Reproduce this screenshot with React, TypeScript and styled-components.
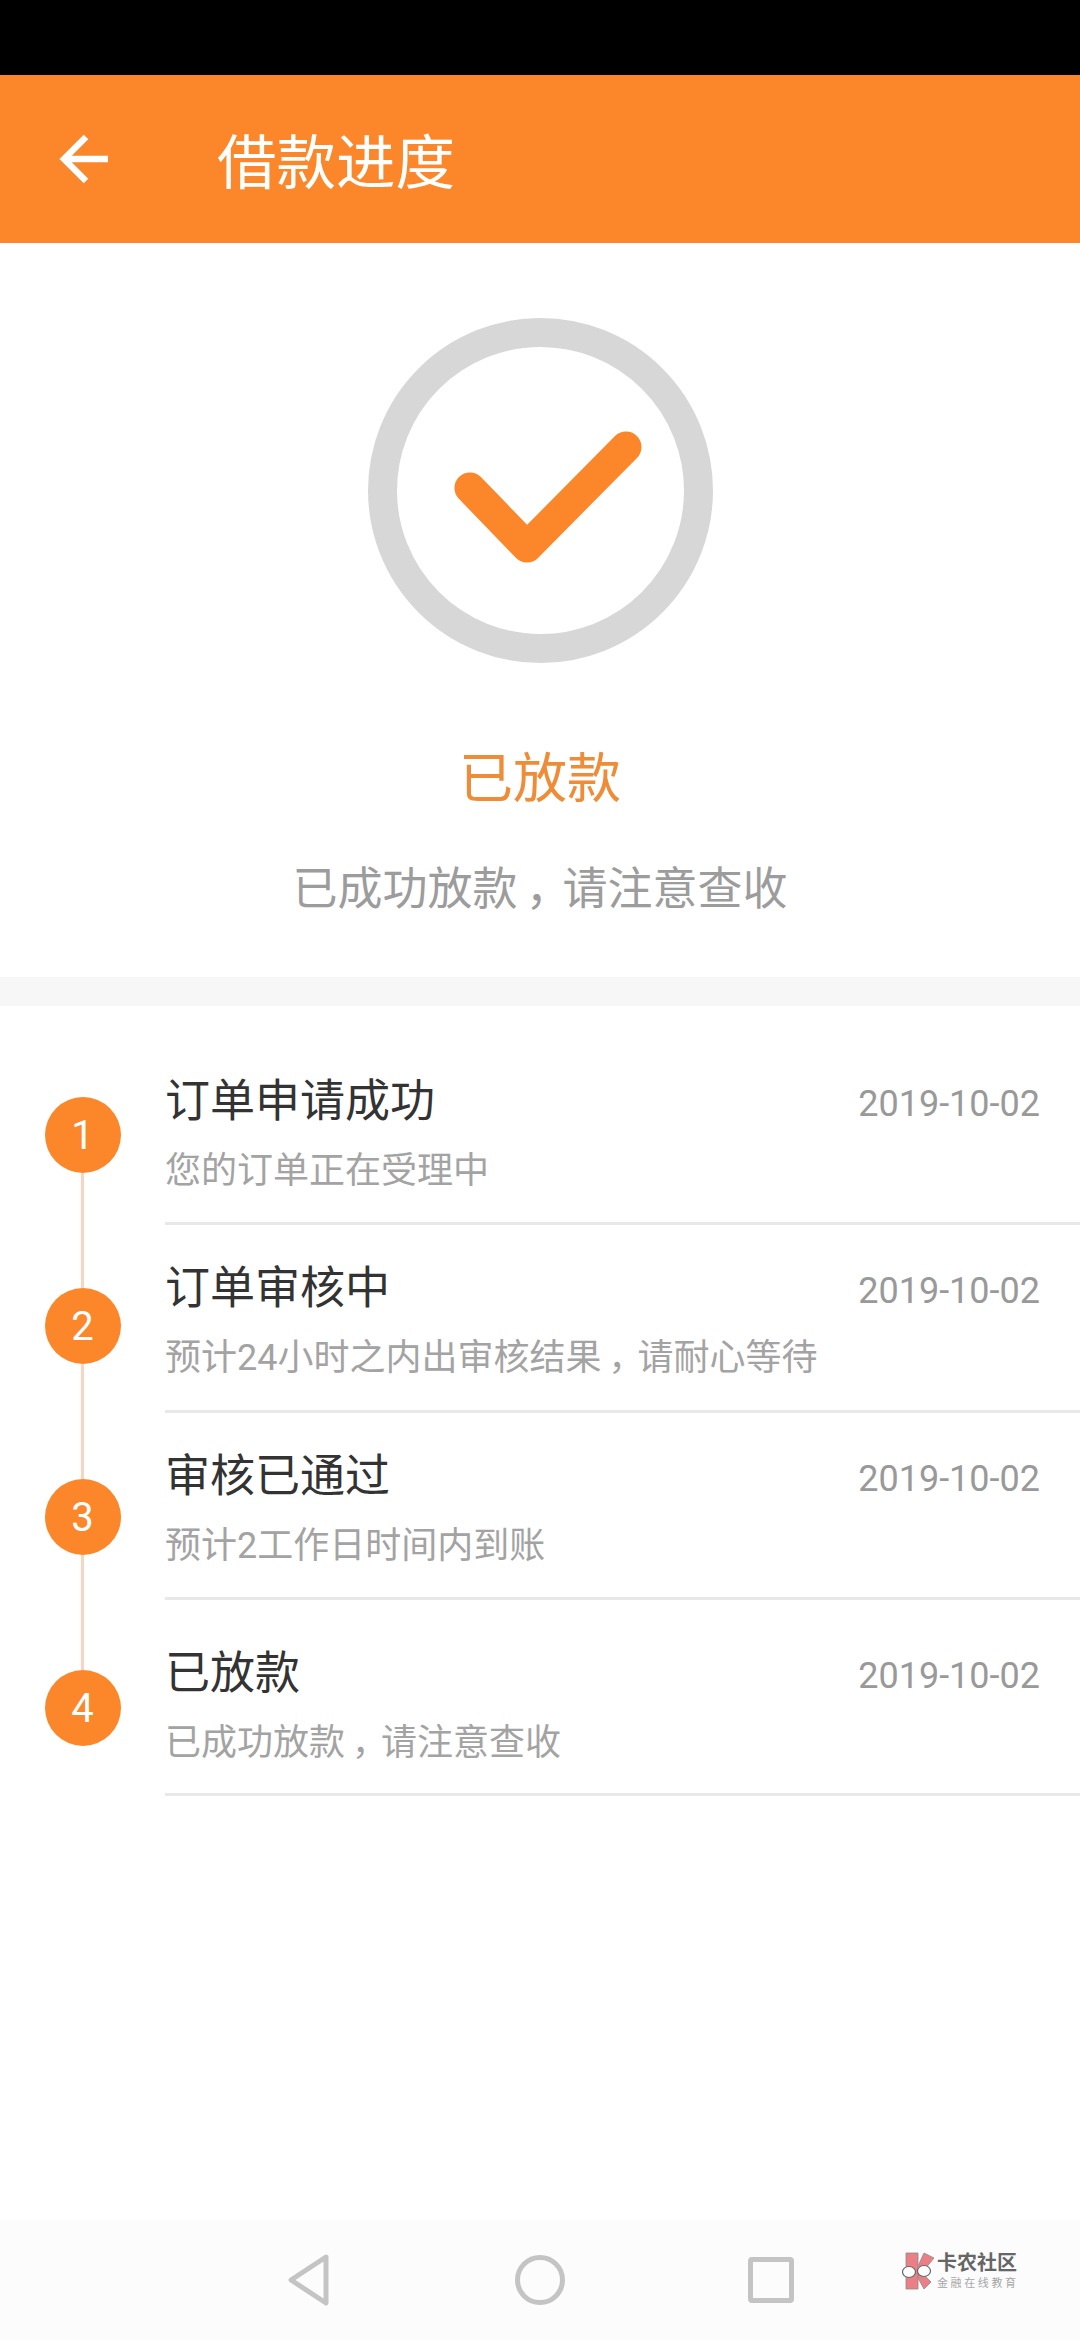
import React from 'react';
import styled, { createGlobalStyle } from 'styled-components';

const ORANGE = '#fb872a';

const GlobalStyle = createGlobalStyle`
  html, body {
    margin: 0;
    padding: 0;
    background: #fff;
  }
  * {
    box-sizing: border-box;
  }
`;

const Page = styled.div`
  width: 1080px;
  height: 2340px;
  display: flex;
  flex-direction: column;
  overflow: hidden;
  background: #fff;
  font-family: Roboto, 'Noto Sans CJK SC', sans-serif;
`;

const StatusBar = styled.div`
  height: 75px;
  background: #000;
`;

const Header = styled.header`
  height: 168px;
  display: flex;
  align-items: center;
  padding-left: 59px;
  gap: 108px;
  background: ${ORANGE};
`;

const Title = styled.h1`
  margin: 0;
  padding-top: 11px;
  font-size: 59.5px;
  line-height: 1;
  font-weight: 400;
  color: #fff;
`;

const Hero = styled.section`
  height: 734px;
  display: flex;
  flex-direction: column;
  align-items: center;
  padding-top: 75px;
`;

const StatusName = styled.div`
  margin-top: 84px;
  font-size: 54px;
  line-height: 66px;
  color: #ee8c37;
`;

const StatusNote = styled.div`
  margin-top: 47px;
  font-size: 45px;
  line-height: 60px;
  color: #9c9c9c;
`;

// the comma sits mid-cell in the reference, not hard left as Noto draws it
const Comma = styled.span`
  display: inline-block;
  width: 1em;
  padding-left: 0.25em;
  font-feature-settings: 'palt';
`;

const Band = styled.div`
  height: 29px;
  background: #f7f7f7;
`;

const Timeline = styled.section`
  display: flex;
  align-items: flex-start;
`;

const Rail = styled.div`
  width: 165px;
  flex: none;
  display: flex;
  flex-direction: column;
  align-items: center;
  padding-top: 91px;
`;

const Dot = styled.div`
  width: 76px;
  height: 76px;
  flex: none;
  display: flex;
  align-items: center;
  justify-content: center;
  border-radius: 50%;
  background: ${ORANGE};
  color: #fff;
  font-size: 40px;
`;

const Connector = styled.div`
  width: 3px;
  height: 115px;
  background: #f8d5c0;
`;

const Rows = styled.div`
  flex: 1;
  min-width: 0;
`;

const Row = styled.div<{ $height: number; $top: number }>`
  height: ${(p) => p.$height}px;
  padding-top: ${(p) => p.$top}px;
  border-bottom: 3px solid #e8e8e8;
`;

const RowHead = styled.div`
  display: flex;
  align-items: flex-start;
  justify-content: space-between;
  padding-right: 40px;
  height: 56px;
`;

const RowTitle = styled.div`
  font-size: 45px;
  line-height: 56px;
  color: #333;
`;

const RowDate = styled.div`
  padding-top: 2px;
  font-size: 36px;
  line-height: 56px;
  color: #999;
`;

const RowNote = styled.div`
  margin-top: 19px;
  font-size: 36px;
  line-height: 44px;
  color: #a3a3a3;
`;

const Spacer = styled.div`
  flex: 1;
`;

const NavBar = styled.nav`
  position: relative;
  height: 120px;
  display: flex;
  align-items: center;
  background: #fcfcfc;
  padding-left: 193px;
`;

const NavSlot = styled.div`
  width: 231px;
  display: flex;
  justify-content: center;
`;

const Watermark = styled.div`
  position: absolute;
  left: 902px;
  top: 32px;
  display: flex;
  align-items: flex-start;
  gap: 1px;
`;

const WatermarkText = styled.div`
  display: flex;
  flex-direction: column;
`;

const WatermarkName = styled.div`
  font-size: 20px;
  line-height: 22px;
  font-weight: 700;
  color: #666;
`;

const WatermarkSub = styled.div`
  font-size: 11px;
  line-height: 14px;
  margin-top: 3px;
  letter-spacing: 2.6px;
  color: #a6a6a6;
`;

const steps = [
  { title: '订单申请成功', note: '您的订单正在受理中', height: 219, top: 68 },
  { title: '订单审核中', note: '预计24小时之内出审核结果，请耐心等待', height: 188, top: 36 },
  { title: '审核已通过', note: '预计2工作日时间内到账', height: 187, top: 36 },
  { title: '已放款', note: '已成功放款，请注意查收', height: 196, top: 46 },
];

const Punctuated = ({ text }: { text: string }) => {
  const [head, tail] = text.split('，');
  if (tail === undefined) return <>{text}</>;
  return (
    <>
      {head}
      <Comma>，</Comma>
      {tail}
    </>
  );
};

const BackArrow = () => (
  <svg width="50" height="52" viewBox="0 0 50 52" fill="none" stroke="#fff" strokeWidth="6.5">
    <path d="M49 26H6" />
    <path d="M27 4L5 26l22 22" />
  </svg>
);

const CheckBadge = () => (
  <svg width="345" height="345" viewBox="0 0 345 345" fill="none">
    <circle cx="172.5" cy="172.5" r="158" stroke="#d7d7d7" strokeWidth="29" />
    <path
      d="M102 170l57 59 99-100"
      stroke={ORANGE}
      strokeWidth="31"
      strokeLinecap="round"
      strokeLinejoin="round"
    />
  </svg>
);

const NavBack = () => (
  <svg width="42" height="52" viewBox="0 0 42 52" fill="none" stroke="#c4c4c4" strokeWidth="5" strokeLinejoin="round">
    <path d="M38 3L3 26l35 23z" />
  </svg>
);

const NavHome = () => (
  <svg width="50" height="52" viewBox="0 0 50 52" fill="none" stroke="#c4c4c4" strokeWidth="5">
    <circle cx="25" cy="26" r="22.5" />
  </svg>
);

const NavRecent = () => (
  <svg width="46" height="46" viewBox="0 0 46 46" fill="none" stroke="#c4c4c4" strokeWidth="5" strokeLinejoin="round">
    <rect x="2.5" y="2.5" width="41" height="41" rx="1.5" />
  </svg>
);

const LogoMark = () => (
  <svg width="34" height="38" viewBox="0 0 34 38">
    <g fill="#ec7f86" stroke="#8a8a8a" strokeWidth="0.8">
      <path d="M4 1h12v36H4z" />
      <path d="M16 14L22 1l10 5-9 11z" />
      <path d="M16 20h3l10 10-7 7-6-11z" />
    </g>
    <ellipse cx="7" cy="20" rx="6.5" ry="5.5" fill="#fff" stroke="#666" strokeWidth="1.2" />
    <ellipse cx="22" cy="19" rx="6.5" ry="5.5" fill="#fff" stroke="#666" strokeWidth="1.2" />
  </svg>
);

export default function App() {
  return (
    <Page>
      <GlobalStyle />
      <StatusBar />
      <Header>
        <BackArrow />
        <Title>借款进度</Title>
      </Header>
      <Hero>
        <CheckBadge />
        <StatusName>已放款</StatusName>
        <StatusNote>
          <Punctuated text="已成功放款，请注意查收" />
        </StatusNote>
      </Hero>
      <Band />
      <Timeline>
        <Rail>
          {steps.map((step, i) => (
            <React.Fragment key={step.title}>
              <Dot>{i + 1}</Dot>
              {i < steps.length - 1 && <Connector />}
            </React.Fragment>
          ))}
        </Rail>
        <Rows>
          {steps.map((step) => (
            <Row key={step.title} $height={step.height} $top={step.top}>
              <RowHead>
                <RowTitle>{step.title}</RowTitle>
                <RowDate>2019-10-02</RowDate>
              </RowHead>
              <RowNote>
                <Punctuated text={step.note} />
              </RowNote>
            </Row>
          ))}
        </Rows>
      </Timeline>
      <Spacer />
      <NavBar>
        <NavSlot>
          <NavBack />
        </NavSlot>
        <NavSlot>
          <NavHome />
        </NavSlot>
        <NavSlot>
          <NavRecent />
        </NavSlot>
        <Watermark>
          <LogoMark />
          <WatermarkText>
            <WatermarkName>卡农社区</WatermarkName>
            <WatermarkSub>金融在线教育</WatermarkSub>
          </WatermarkText>
        </Watermark>
      </NavBar>
    </Page>
  );
}
